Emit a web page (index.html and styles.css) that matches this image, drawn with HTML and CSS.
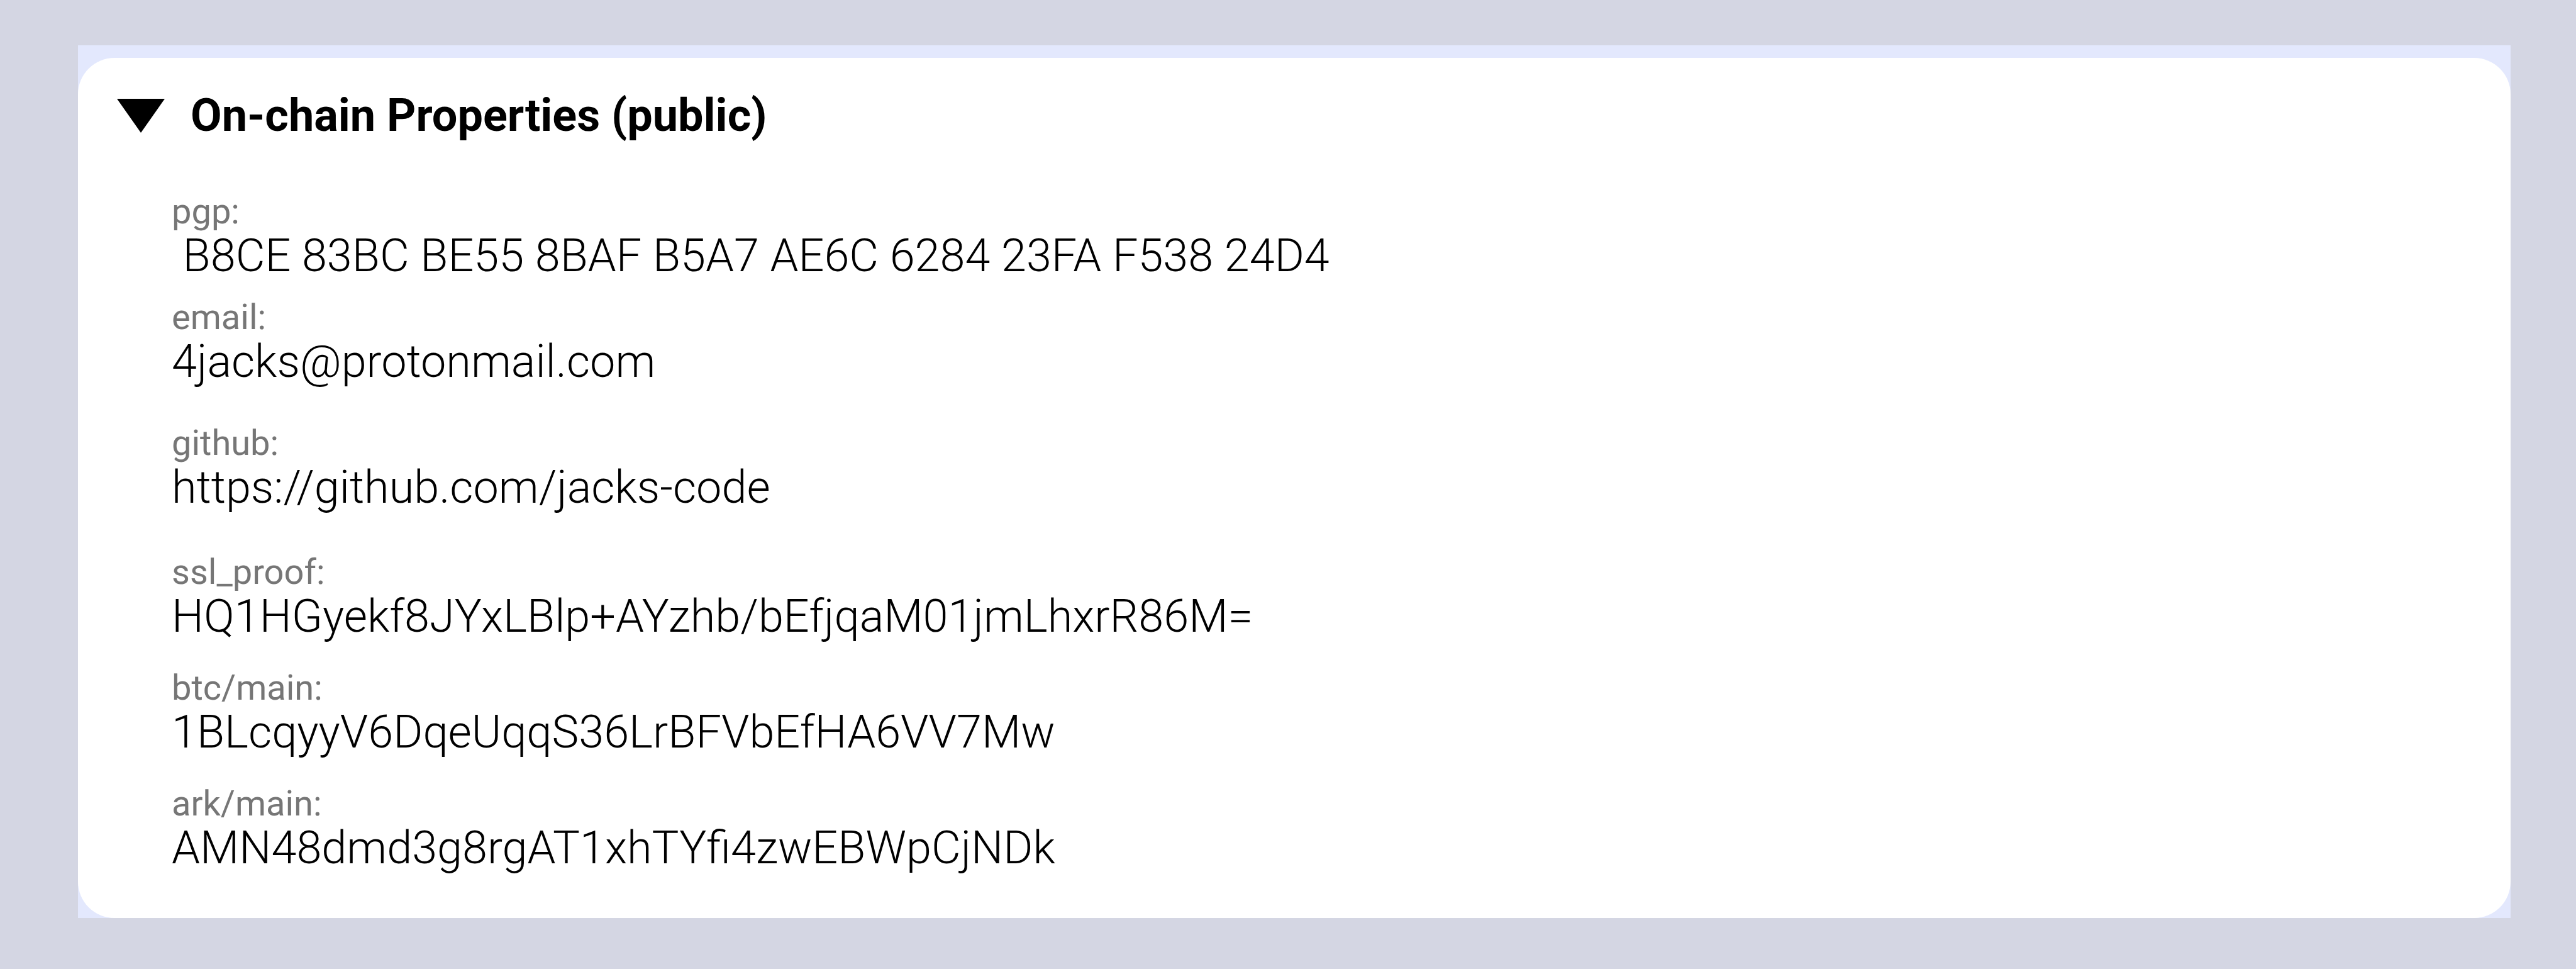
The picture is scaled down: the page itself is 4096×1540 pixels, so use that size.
FILE: index.html
```html
<!DOCTYPE html>
<html lang="en">
<head>
<meta charset="utf-8">
<title>On-chain Properties</title>
<link rel="stylesheet" href="styles.css">
</head>
<body>
<div class="frame">
  <details class="card" open>
    <summary class="card__summary">
      <svg class="card__marker" width="76" height="54" viewBox="0 0 76 54" aria-hidden="true"><polygon points="0,0 76,0 38,54" fill="#000"/></svg>
      <span class="card__title">On-chain Properties (public)</span>
    </summary>
    <div class="props">
      <div class="prop">
        <div class="prop__label">pgp:</div>
        <div class="prop__value prop__value--pre"> B8CE 83BC BE55 8BAF B5A7 AE6C 6284 23FA F538 24D4</div>
      </div>
      <div class="prop prop--gap-s">
        <div class="prop__label">email:</div>
        <div class="prop__value">4jacks@protonmail.com</div>
      </div>
      <div class="prop prop--gap-l">
        <div class="prop__label">github:</div>
        <div class="prop__value">https://github.com/jacks-code</div>
      </div>
      <div class="prop prop--gap-xl">
        <div class="prop__label">ssl_proof:</div>
        <div class="prop__value">HQ1HGyekf8JYxLBlp+AYzhb/bEfjqaM01jmLhxrR86M=</div>
      </div>
      <div class="prop prop--gap-m">
        <div class="prop__label">btc/main:</div>
        <div class="prop__value">1BLcqyyV6DqeUqqS36LrBFVbEfHA6VV7Mw</div>
      </div>
      <div class="prop prop--gap-m">
        <div class="prop__label">ark/main:</div>
        <div class="prop__value">AMN48dmd3g8rgAT1xhTYfi4zwEBWpCjNDk</div>
      </div>
    </div>
  </details>
</div>
</body>
</html>
```
FILE: styles.css
```css
html, body {
  margin: 0;
  padding: 0;
}

body {
  background: #d4d6e3;
  font-family: Roboto, "Liberation Sans", sans-serif;
  color: #000;
  padding: 72px 104px 80px 124px;
}

.frame {
  background: #e3e8fd;
  padding-top: 20px;
}

.card {
  background: #fff;
  border-radius: 58px;
  padding: 50px 0 72px 0;
}

.card__summary {
  display: flex;
  align-items: center;
  gap: 41px;
  padding-left: 62px;
  list-style: none;
  cursor: pointer;
}

.card__summary::-webkit-details-marker {
  display: none;
}

.card__marker {
  display: block;
  flex: none;
}

.card__title {
  font-size: 72px;
  line-height: 84px;
  font-weight: 700;
}

.props {
  padding-left: 149px;
  margin-top: 78px;
}

.prop__label {
  font-size: 56px;
  line-height: 64px;
  font-weight: 400;
  color: #767676;
}

.prop__value {
  font-size: 72px;
  line-height: 78px;
  font-weight: 300;
  color: #000;
}

.prop__value--pre {
  white-space: pre;
}

.prop--gap-s { margin-top: 26px; }
.prop--gap-m { margin-top: 42px; }
.prop--gap-l { margin-top: 58px; }
.prop--gap-xl { margin-top: 63px; }
```
